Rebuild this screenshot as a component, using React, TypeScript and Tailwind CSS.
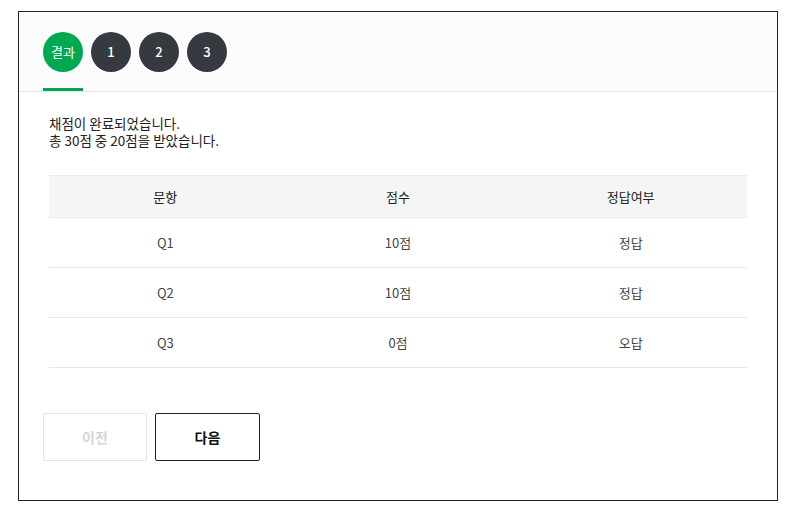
const rows = [
  { q: "Q1", score: "10점", result: "정답" },
  { q: "Q2", score: "10점", result: "정답" },
  { q: "Q3", score: "0점", result: "오답" },
];

const font = "font-['Noto_Sans_CJK_KR','Noto_Sans',sans-serif]";

export default function App() {
  return (
    <div className={`w-[785px] h-[520px] bg-white pt-[11px] pl-[18px] ${font}`}>
      <div className="w-[760px] h-[490px] border border-[#222] bg-white">
        <div className="bg-[#fcfcfc] border-b border-[#e5e5e5] px-6 pt-5 flex gap-2">
          <div className="flex flex-col items-center">
            <div className="w-10 h-10 rounded-full bg-[#00a84f] text-white text-[13px] flex items-center justify-center">
              결과
            </div>
            <div className="mt-4 h-[3px] w-10 bg-[#00a84f]" />
          </div>
          {["1", "2", "3"].map((n) => (
            <div key={n} className="flex flex-col items-center">
              <div className="w-10 h-10 rounded-full bg-[#343a40] text-white text-[13px] font-medium flex items-center justify-center">
                {n}
              </div>
            </div>
          ))}
        </div>

        <div className="px-[30px] pt-[23px]">
          <div className="text-[13.5px] leading-[17px] text-[#222]">
            <p>채점이 완료되었습니다.</p>
            <p>총 30점 중 20점을 받았습니다.</p>
          </div>

          <table className="mt-[26px] w-[698px] table-fixed border-collapse text-[13px] text-[#444]">
            <thead>
              <tr className="bg-[#f5f5f5] border-t border-b border-[#eaeaea] h-[42px]">
                <th className="font-normal text-[#222]">문항</th>
                <th className="font-normal text-[#222]">점수</th>
                <th className="font-normal text-[#222]">정답여부</th>
              </tr>
            </thead>
            <tbody>
              {rows.map((r) => (
                <tr key={r.q} className="border-b border-[#e8e8e8] h-[50px] text-center">
                  <td>{r.q}</td>
                  <td>{r.score}</td>
                  <td>{r.result}</td>
                </tr>
              ))}
            </tbody>
          </table>
        </div>

        <div className="flex gap-2 px-6 mt-[45px]">
          <button className="w-[104px] h-[48px] border border-[#e3e3e3] rounded-[2px] text-[14px] font-bold text-[#d5d5d5] bg-white">
            이전
          </button>
          <button className="w-[105px] h-[48px] border border-[#222] rounded-[2px] text-[14px] font-bold text-[#111] bg-white">
            다음
          </button>
        </div>
      </div>
    </div>
  );
}
